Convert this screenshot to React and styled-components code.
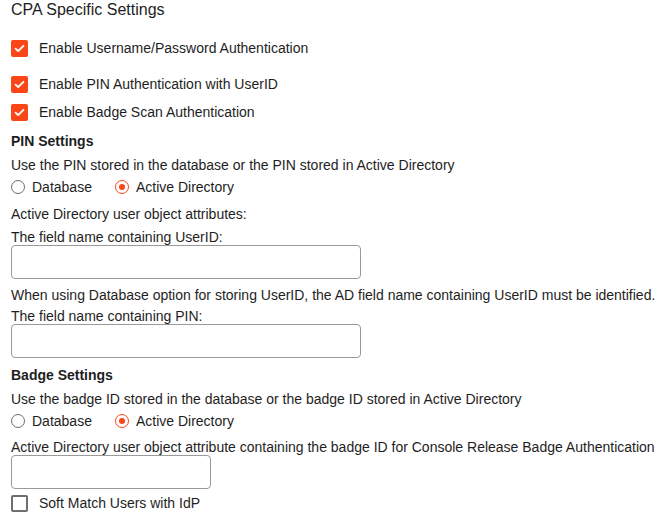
import React from 'react';
import styled, { createGlobalStyle } from 'styled-components';

const GlobalStyle = createGlobalStyle`
  body {
    margin: 0;
    background: #ffffff;
    font-family: "Liberation Sans", Arial, sans-serif;
    color: #1e1e1e;
  }
`;

const Page = styled.div`
  display: flex;
  flex-direction: column;
  padding: 0 11px;
  width: 665px;
  box-sizing: border-box;
`;

const Title = styled.div`
  font-size: 16px;
  line-height: 20px;
  margin-top: 0;
`;

const SectionTitle = styled.div`
  font-size: 14px;
  font-weight: bold;
  line-height: 20px;
  margin-top: ${p => p.$top || 0}px;
`;

const Text = styled.div`
  font-size: 14px;
  line-height: 20px;
  white-space: nowrap;
  margin-top: ${p => p.$top || 0}px;
`;

const CheckRow = styled.label`
  display: flex;
  align-items: center;
  gap: 11px;
  font-size: 14px;
  line-height: 17px;
  margin-top: ${p => p.$top || 0}px;
`;

const Box = styled.span`
  width: 17px;
  height: 17px;
  box-sizing: border-box;
  border-radius: 2px;
  display: flex;
  align-items: center;
  justify-content: center;
  background: ${p => (p.$checked ? '#fa4616' : '#fff')};
  border: ${p => (p.$checked ? 'none' : '2px solid #6e6e6e')};
`;

const RadioGroup = styled.div`
  display: flex;
  align-items: center;
  gap: 23px;
  margin-top: ${p => p.$top || 0}px;
`;

const RadioOption = styled.label`
  display: flex;
  align-items: center;
  gap: 7px;
  font-size: 14px;
  line-height: 20px;
`;

const Radio = styled.span`
  width: 14px;
  height: 14px;
  box-sizing: border-box;
  border-radius: 50%;
  display: flex;
  align-items: center;
  justify-content: center;
  border: 1.5px solid ${p => (p.$checked ? '#fa4616' : '#6e6e6e')};

  &::after {
    content: '';
    width: 6px;
    height: 6px;
    border-radius: 50%;
    background: #fa4616;
    display: ${p => (p.$checked ? 'block' : 'none')};
  }
`;

const Field = styled.input`
  width: ${p => p.$width}px;
  height: 34px;
  box-sizing: border-box;
  border: 1px solid #9a9a9a;
  border-radius: 4px;
  margin-top: ${p => p.$top || 0}px;
  padding: 0 8px;
  font-size: 14px;
  background: #fff;
`;

const Tick = () => (
  <svg width="11" height="9" viewBox="0 0 11 9">
    <path d="M1.5 4.6 L4.2 7 L9.5 1.8" fill="none" stroke="#fff" strokeWidth="1.8" strokeLinecap="round" strokeLinejoin="round" />
  </svg>
);

const Check = ({ checked, children, top }) => (
  <CheckRow $top={top}>
    <Box $checked={checked}>{checked && <Tick />}</Box>
    {children}
  </CheckRow>
);

const SourceChoice = ({ top }) => (
  <RadioGroup $top={top}>
    <RadioOption>
      <Radio />
      Database
    </RadioOption>
    <RadioOption>
      <Radio $checked />
      Active Directory
    </RadioOption>
  </RadioGroup>
);

export default function App() {
  return (
    <>
      <GlobalStyle />
      <Page>
        <Title>CPA Specific Settings</Title>
        <Check checked top={20}>Enable Username/Password Authentication</Check>
        <Check checked top={19}>Enable PIN Authentication with UserID</Check>
        <Check checked top={11}>Enable Badge Scan Authentication</Check>

        <SectionTitle $top={10}>PIN Settings</SectionTitle>
        <Text $top={4}>Use the PIN stored in the database or the PIN stored in Active Directory</Text>
        <SourceChoice top={2} />
        <Text $top={7}>Active Directory user object attributes:</Text>
        <Text $top={3}>The field name containing UserID:</Text>
        <Field $width={350} $top={-2} />
        <Text $top={6}>When using Database option for storing UserID, the AD field name containing UserID must be identified.</Text>
        <Text $top={1}>The field name containing PIN:</Text>
        <Field $width={350} $top={-2} />

        <SectionTitle $top={7}>Badge Settings</SectionTitle>
        <Text $top={4}>Use the badge ID stored in the database or the badge ID stored in Active Directory</Text>
        <SourceChoice top={2} />
        <Text $top={6}>Active Directory user object attribute containing the badge ID for Console Release Badge Authentication</Text>
        <Field $width={200} $top={-2} />
        <Check top={6}>Soft Match Users with IdP</Check>
      </Page>
    </>
  );
}
